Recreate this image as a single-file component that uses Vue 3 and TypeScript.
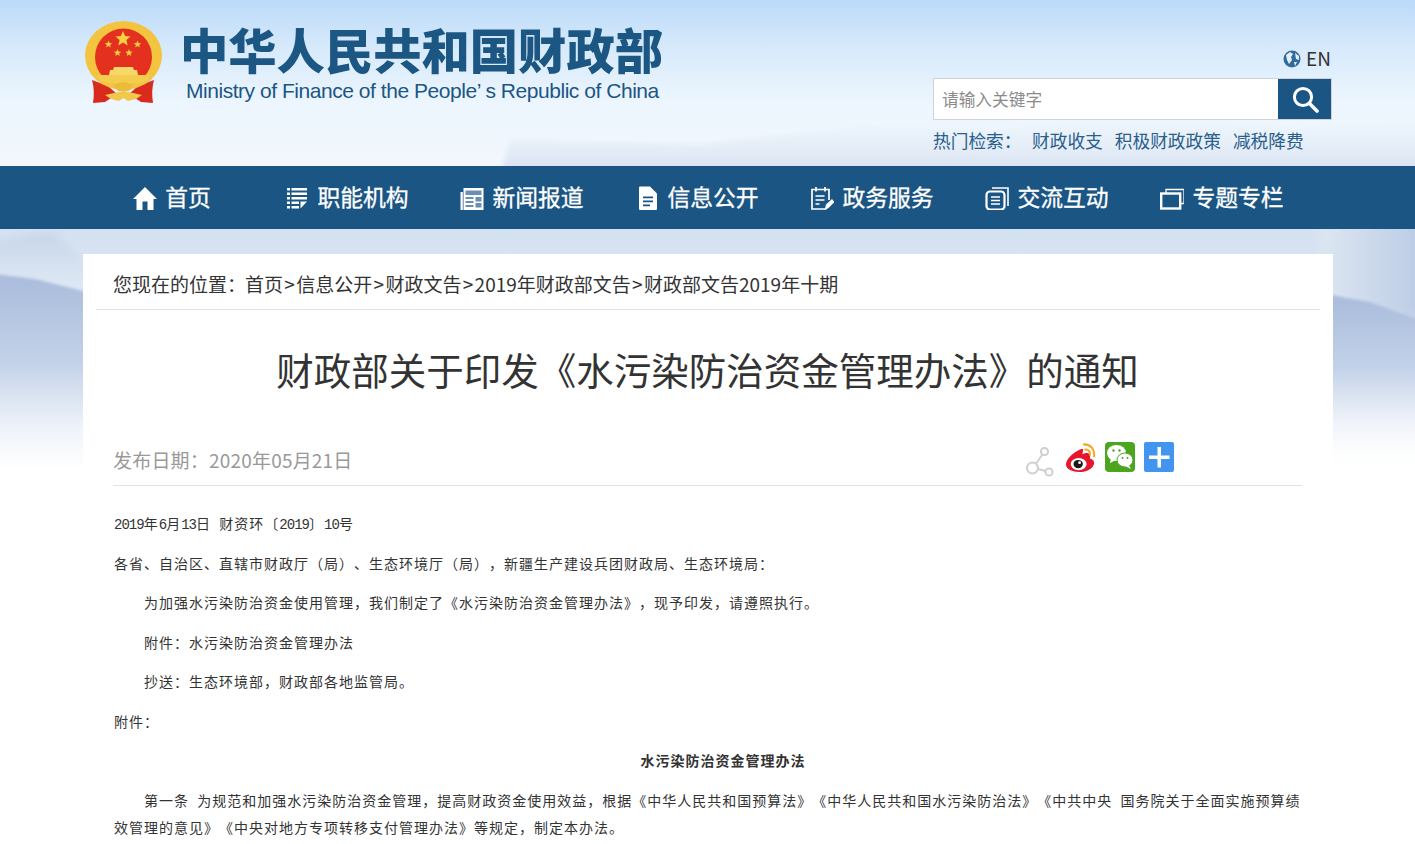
<script setup lang="ts">
import { ref } from "vue";

const keyword = ref("");

const hotWords = ["财政收支", "积极财政政策", "减税降费"];

const navItems = [
  { label: "首页", icon: "home" },
  { label: "职能机构", icon: "list" },
  { label: "新闻报道", icon: "news" },
  { label: "信息公开", icon: "doc" },
  { label: "政务服务", icon: "service" },
  { label: "交流互动", icon: "copy" },
  { label: "专题专栏", icon: "window" },
];

const crumbs = ["首页", "信息公开", "财政文告", "2019年财政部文告", "财政部文告2019年十期"];
</script>

<template>
  <div class="page">
    <svg class="scenery" viewBox="0 0 1415 844" preserveAspectRatio="none" aria-hidden="true">
      <defs>
        <linearGradient id="range" x1="0" y1="0" x2="0" y2="1">
          <stop offset="0" stop-color="#a9bbdc" />
          <stop offset="0.45" stop-color="#c2d1e8" />
          <stop offset="0.8" stop-color="#f0f4fa" />
          <stop offset="1" stop-color="#ffffff" />
        </linearGradient>
        <linearGradient id="far" x1="0" y1="0" x2="0" y2="1">
          <stop offset="0" stop-color="#d4e1f1" />
          <stop offset="0.35" stop-color="#e0e9f5" />
          <stop offset="1" stop-color="#ffffff" />
        </linearGradient>
        <linearGradient id="peak" x1="0" y1="0" x2="0" y2="1">
          <stop offset="0" stop-color="#c6d5ea" />
          <stop offset="1" stop-color="#dde7f3" />
        </linearGradient>
        <linearGradient id="rightPeak" x1="0" y1="0" x2="1" y2="0">
          <stop offset="0" stop-color="#dde7f3" />
          <stop offset="1" stop-color="#b6c7e2" />
        </linearGradient>
        <filter id="soft" filterUnits="userSpaceOnUse" x="-40" y="200" width="1500" height="320">
          <feGaussianBlur stdDeviation="1.500" />
        </filter>
        <filter id="softer" filterUnits="userSpaceOnUse" x="-40" y="200" width="1500" height="320">
          <feGaussianBlur stdDeviation="4" />
        </filter>
      </defs>
      <rect x="0" y="229" width="1415" height="240" fill="url(#far)" />
      <path d="M-20 244 L30 234 L52 232 L70 246 L90 266 L90 282 L-20 276 Z" fill="url(#peak)" filter="url(#softer)" />
      <path d="M-20 272 L35 279 L83 291 L100 294 L100 470 L-20 470 Z" fill="url(#range)" filter="url(#soft)" />
      <path d="M1320 215 L1440 215 L1440 325 L1320 296 Z" fill="url(#rightPeak)" filter="url(#softer)" />
      <path d="M1320 293 L1370 302 L1440 326 L1440 456 L1320 456 Z" fill="url(#range)" filter="url(#soft)" />
    </svg>

    <header class="top">
      <svg class="top-hills" viewBox="0 0 1415 60" preserveAspectRatio="none" aria-hidden="true">
        <defs>
          <linearGradient id="hill" x1="0" y1="0" x2="0" y2="1">
            <stop offset="0" stop-color="#e6eef8" stop-opacity="0" />
            <stop offset="1" stop-color="#d2deef" />
          </linearGradient>
          <filter id="hillBlur" x="-5%" y="-20%" width="110%" height="140%">
            <feGaussianBlur stdDeviation="2" />
          </filter>
        </defs>
        <path d="M500 70 L510 34 L700 38 L860 20 L1000 24 L1120 6 L1300 22 L1440 12 L1440 70 Z" fill="url(#hill)" filter="url(#hillBlur)" />
      </svg>
      <div class="top-inner">
        <div class="brand">
          <svg class="emblem" viewBox="0 0 80 84">
            <path d="M8 60 L24 66 L33 74 L21 82 L9 83 Q11 70 8 60 Z M70 60 L54 66 L45 74 L57 82 L69 83 Q67 70 70 60 Z" fill="#d92a1e" />
            <ellipse cx="39.500" cy="35.500" rx="38.500" ry="34.500" fill="#f2c440" />
            <circle cx="39.500" cy="37" r="28.500" fill="#e3301f" />
            <path d="M30 47 L49 47 L50 50 L53 50 L54 55 L25 55 L26 50 L29 50 Z" fill="#f6d76a" />
            <path d="M13 55 L66 55 L63 61 L39.500 66 L16 61 Z" fill="#f4cd50" />
            <path d="M30 66 Q39.500 58 49 66 L45 71 L34 71 Z" fill="#edbb3a" />
            <path d="M21 75 L30 73 L39.500 71 L49 73 L58 75 L52 79 L44 81 L39.500 78 L35 81 L27 79 Z" fill="#f2c84c" />
            <polygon points="39,11 41.100,16.100 46.600,16.500 42.400,20 43.700,25.400 39,22.500 34.300,25.400 35.600,20 31.400,16.500 36.900,16.100" fill="#f6d040" />
            <polygon points="24.500,20.500 25.500,23 28.200,23.200 26.100,24.900 26.800,27.500 24.500,26.100 22.200,27.500 22.900,24.900 20.800,23.200 23.500,23" fill="#f6d040" />
            <polygon points="53.500,20.500 54.500,23 57.200,23.200 55.100,24.900 55.800,27.500 53.500,26.100 51.200,27.500 51.900,24.900 49.800,23.200 52.500,23" fill="#f6d040" />
            <polygon points="33.500,29 34.500,31.500 37.200,31.700 35.100,33.400 35.800,36 33.500,34.600 31.200,36 31.900,33.400 29.800,31.700 32.500,31.500" fill="#f6d040" />
            <polygon points="45,29 46,31.500 48.700,31.700 46.600,33.400 47.300,36 45,34.600 42.700,36 43.400,33.400 41.300,31.700 44,31.500" fill="#f6d040" />
          </svg>
          <div class="brand-text">
            <div class="brand-cn">中华人民共和国财政部</div>
            <div class="brand-en">Ministry of Finance of the People’ s Republic of China</div>
          </div>
        </div>
        <div class="tools">
          <a class="lang">
            <svg class="globe" viewBox="0 0 18 18">
              <circle cx="9" cy="9" r="8.500" fill="#2f6d9e" />
              <path d="M3 5 L7 2 L10 4 L8 7 L9 10 L6 14 L4 10 Z M12 3 L16 6 L16 10 L13 9 Z M11 12 L14 12 L12 16 Z" fill="#e4eef6" />
            </svg>
            EN
          </a>
          <div class="search">
            <input v-model="keyword" class="search-input" placeholder="请输入关键字" />
            <button class="search-btn" aria-label="搜索">
              <svg viewBox="0 0 28 28" width="28" height="28">
                <circle cx="12" cy="12" r="8.600" fill="none" stroke="#fff" stroke-width="3" />
                <path d="M18.500 18.500 L26 26" stroke="#fff" stroke-width="3.600" stroke-linecap="round" />
              </svg>
            </button>
          </div>
          <div class="hot">
            <span class="hot-title">热门检索：</span>
            <a v-for="word in hotWords" :key="word" class="hot-word">{{ word }}</a>
          </div>
        </div>
      </div>
    </header>

    <nav class="nav">
      <a v-for="item in navItems" :key="item.label" class="nav-item">
        <svg class="nav-icon" viewBox="0 0 24 24">
          <path v-if="item.icon === 'home'" d="M12 1 L24 13 L20.500 13 L20.500 24 L14.500 24 L14.500 15.500 L9.500 15.500 L9.500 24 L3.500 24 L3.500 13 L0 13 Z" fill="#fff" />
          <g v-else-if="item.icon === 'list'" fill="#fff">
            <path d="M2 2h3v2.500H2zM6.500 2H22v2.500H6.500zM2 6.500h3V9H2zM6.500 6.500H22V9H6.500zM2 11h3v2.500H2zM6.500 11H22v2.500H6.500zM2 15.500h3V18H2zM6.500 15.500H14V18H6.500zM2 20h3v2.500H2zM6.500 20H14v2.500H6.500zM15.500 15.500H22l-6.500 7z" />
          </g>
          <g v-else-if="item.icon === 'news'">
            <path d="M0.500 6H2.800v18H0.500zM3.500 2h20v22h-20z" fill="#fff" />
            <path d="M5.500 4.500h16v4.500h-16zM5.500 11h8v2h-8zM5.500 15h8v2h-8zM5.500 19h8v2h-8zM15.500 11h6v4.500h-6zM15.500 17h6v4.500h-6z" fill="#6a8fb2" />
          </g>
          <g v-else-if="item.icon === 'doc'">
            <path d="M5 0.500h10l7 7V23q0 1-1 1H5q-1 0-1-1V1.500q0-1 1-1z" fill="#fff" />
            <path d="M8 10.500h10v1.800H8zM8 14.500h10v1.800H8zM8 18.500h7v1.800H8z" fill="#1b5584" />
          </g>
          <g v-else-if="item.icon === 'service'" fill="none" stroke="#fff" stroke-width="1.700">
            <path d="M15 23H2V3.500h17V14" />
            <path d="M6 1v4.500M15 1v4.500M5.500 10h9M5.500 14h9M5.500 18h4" />
            <path d="M14.500 24.500l1.500-6 6-5.500 2.500 3-6 6z" fill="#fff" stroke="none" />
          </g>
          <g v-else-if="item.icon === 'copy'" fill="none" stroke="#fff" stroke-width="2.200">
            <path d="M7 2h16v18" stroke-width="1.600" />
            <rect x="1.500" y="5.500" width="18" height="18" rx="3.500" />
            <path d="M6 11h9M6 14.500h9M6 18h9" stroke-width="1.600" />
          </g>
          <g v-else fill="none" stroke="#fff">
            <path d="M6 7V3.500h18v14h-4" stroke-width="1.300" />
            <rect x="1.200" y="7.500" width="19" height="15" stroke-width="2.400" />
          </g>
        </svg>
        <span>{{ item.label }}</span>
      </a>
    </nav>

    <main class="card">
      <div class="crumbs">
        <span class="here">您现在的位置：</span>
        <template v-for="(crumb, i) in crumbs" :key="crumb">
          <a>{{ crumb }}</a><span v-if="i < crumbs.length - 1" class="sep">&gt;</span>
        </template>
      </div>
      <div class="article">
        <h1 class="title">财政部关于印发《水污染防治资金管理办法》的通知</h1>
        <div class="meta">
          <span class="date">发布日期：2020年05月21日</span>
          <div class="share">
            <svg class="share-link" viewBox="0 0 30 30">
              <g fill="none" stroke="#cfcfcf" stroke-width="2">
                <circle cx="18.500" cy="4.500" r="3.600" />
                <circle cx="6.500" cy="21" r="5.500" />
                <circle cx="23" cy="25" r="3.600" />
                <path d="M16.500 7.500 L10 16.500 M12 22 L19.500 24" />
              </g>
            </svg>
            <svg class="share-icon weibo" viewBox="0 0 32 32">
              <path d="M15 7 C8 10 0 17 0 23 C0 28 7 31 14 31 C22 31 30 27 30 21 C30 18 27 17 25.500 16.500 C26.500 13 25 9.500 20 11 L17.500 12 C18.500 7 19 5 15 7 Z" fill="#e6162d" />
              <ellipse cx="13.500" cy="22.500" rx="8.500" ry="6.500" fill="#fff" />
              <ellipse cx="13" cy="22.500" rx="5" ry="4.500" fill="#1a1a1a" />
              <circle cx="14.500" cy="21" r="1.500" fill="#fff" />
              <path d="M19 1.500 C26 1 31 7 30 14 M20.500 7 C24 6.500 26 9.500 25.500 12.500" fill="none" stroke="#f5a623" stroke-width="2.200" stroke-linecap="round" />
            </svg>
            <svg class="share-icon" viewBox="0 0 30 30">
              <rect width="30" height="30" rx="4" fill="#4ba51f" />
              <ellipse cx="11.500" cy="11" rx="9.500" ry="8" fill="#fff" />
              <path d="M6 16 L5 21 L11 18 Z" fill="#fff" />
              <ellipse cx="20" cy="18" rx="8" ry="7" fill="#fff" stroke="#4ba51f" stroke-width="1" />
              <path d="M24 23 L26 27 L20 24 Z" fill="#fff" />
              <circle cx="8.500" cy="8.500" r="1.200" fill="#4ba51f" />
              <circle cx="14.500" cy="8.500" r="1.200" fill="#4ba51f" />
              <circle cx="17.500" cy="16" r="1" fill="#4ba51f" />
              <circle cx="22.500" cy="16" r="1" fill="#4ba51f" />
            </svg>
            <svg class="share-icon" viewBox="0 0 30 30">
              <rect width="30" height="30" rx="2" fill="#4295ee" />
              <path d="M13.500 5h3.500v8.500h8.500v3.500H17v8.500h-3.500V17H5v-3.500h8.500z" fill="#fff" />
            </svg>
          </div>
        </div>
        <div class="content">
          <p class="dateline"><span class="num">2019</span>年<span class="num">6</span>月<span class="num">13</span>日&nbsp; 财资环〔<span class="num">2019</span>〕<span class="num">10</span>号</p>
          <p>各省、自治区、直辖市财政厅（局）、生态环境厅（局），新疆生产建设兵团财政局、生态环境局：</p>
          <p class="indent">为加强水污染防治资金使用管理，我们制定了《水污染防治资金管理办法》，现予印发，请遵照执行。</p>
          <p class="indent">附件：水污染防治资金管理办法</p>
          <p class="indent">抄送：生态环境部，财政部各地监管局。</p>
          <p>附件：</p>
          <p class="indent center"><strong>水污染防治资金管理办法</strong></p>
          <p class="indent">第一条&nbsp; 为规范和加强水污染防治资金管理，提高财政资金使用效益，根据《中华人民共和国预算法》《中华人民共和国水污染防治法》《中共中央&nbsp; 国务院关于全面实施预算绩效管理的意见》《中央对地方专项转移支付管理办法》等规定，制定本办法。</p>
        </div>
      </div>
    </main>
  </div>
</template>

<style>
html,
body {
  margin: 0;
  background: #fff;
}
</style>

<style scoped>
.page {
  position: relative;
  height: 844px;
  overflow: hidden;
  font-family: "Noto Sans CJK SC", "Noto Sans", sans-serif;
  color: #333;
  text-spacing-trim: space-all;
}
.scenery {
  position: absolute;
  left: 0;
  top: 0;
  width: 1415px;
  height: 844px;
}
.top {
  position: relative;
  height: 166px;
  background: linear-gradient(180deg, #bbdaf9 0%, #d6e9fb 28%, #edf6fe 62%, #f2f7fc 100%);
}
.top-hills {
  position: absolute;
  left: 0;
  bottom: 0;
  width: 1415px;
  height: 60px;
}
.top-inner {
  position: relative;
  display: flex;
  justify-content: space-between;
  padding: 0 83px 0 84px;
}
.brand {
  display: flex;
  align-items: flex-start;
  padding-top: 20px;
}
.emblem {
  width: 80px;
  height: 84px;
  flex: none;
}
.brand-text {
  margin-left: 16px;
}
.brand-cn {
  margin-top: 3px;
  font-size: 48.300px;
  line-height: 50px;
  font-weight: 900;
  color: #1c5683;
  white-space: nowrap;
}
.brand-en {
  margin: 5px 0 0 6px;
  font-family: "Liberation Sans", sans-serif;
  font-size: 21px;
  letter-spacing: -0.460px;
  line-height: 26px;
  color: #1c5683;
  white-space: nowrap;
}
.tools {
  display: flex;
  flex-direction: column;
  align-items: flex-end;
  width: 399px;
  padding-top: 44px;
}
.lang {
  display: flex;
  align-items: center;
  gap: 5px;
  height: 26px;
  padding-right: 1px;
  font-size: 19px;
  color: #333;
}
.globe {
  width: 18px;
  height: 18px;
  margin-top: 3px;
}
.search {
  display: flex;
  width: 399px;
  height: 42px;
  margin-top: 8px;
  box-sizing: border-box;
  border: 1px solid #cfd3d8;
  background: #fff;
}
.search-input {
  flex: 1;
  min-width: 0;
  border: 0;
  outline: 0;
  padding: 0 8px;
  font: inherit;
  font-size: 16.700px;
  background: transparent;
}
.search-input::placeholder {
  color: #8a8a8a;
}
.search-btn {
  display: flex;
  align-items: center;
  justify-content: center;
  width: 53px;
  border: 0;
  padding: 0;
  background: #1b5584;
}
.hot {
  display: flex;
  align-self: flex-start;
  margin-top: 7px;
  font-size: 17.700px;
  line-height: 26px;
  color: #2a5f8c;
  white-space: nowrap;
}
.hot-title {
  width: 99px;
}
.hot-word {
  margin-right: 12px;
}
.nav {
  position: relative;
  display: grid;
  grid-template-columns: repeat(7, 175px);
  height: 63px;
  padding-left: 84.500px;
  background: #1b5584;
}
.nav-item {
  display: flex;
  align-items: center;
  justify-content: center;
  gap: 8px;
  padding-bottom: 3px;
  font-size: 22.800px;
  color: #fff;
  -webkit-text-stroke: 0.300px #fff;
}
.nav-icon {
  width: 24px;
  height: 24px;
  flex: none;
  margin-top: 3px;
}
.card {
  position: relative;
  width: 1250px;
  margin: 25px 0 0 83px;
  background: #fff;
}
.crumbs {
  display: flex;
  align-items: center;
  height: 51px;
  margin: 0 13px;
  padding: 4px 0 0 17px;
  border-bottom: 1px solid #e3e3e3;
  font-size: 19px;
  white-space: nowrap;
}
.here {
  width: 132px;
}
.sep {
  width: 13.200px;
  text-align: center;
}
.article {
  padding: 0 31px 0 30px;
}
.title {
  margin: 33px 0 0;
  font-size: 37.500px;
  line-height: 52px;
  font-weight: 400;
  text-align: center;
  white-space: nowrap;
}
.meta {
  position: relative;
  display: flex;
  align-items: center;
  justify-content: space-between;
  height: 51px;
  margin-top: 39px;
  border-bottom: 1px solid #e3e3e3;
}
.date {
  font-size: 19px;
  letter-spacing: 0.200px;
  color: #999;
}
.share {
  display: flex;
  align-items: flex-start;
  align-self: flex-start;
  gap: 9px;
  margin: 8px 128px 0 0;
}
.share-link {
  width: 30px;
  height: 30px;
  margin-top: 5px;
  margin-left: -1px;
  margin-right: 1px;
}
.share-icon {
  width: 30px;
  height: 30px;
}
.weibo {
  margin-top: 1px;
}
.content {
  padding: 24px 0 0 1px;
  font-size: 14px;
  letter-spacing: 1px;
  line-height: 27px;
}
.content p {
  margin: 0 0 12.500px;
}
.content .dateline {
  height: 27px;
}
.num {
  font-family: "Liberation Mono", monospace;
  font-size: 14px;
  line-height: 1;
  letter-spacing: -0.970px;
}
.indent {
  text-indent: 30px;
}
.center {
  text-align: center;
}
</style>
